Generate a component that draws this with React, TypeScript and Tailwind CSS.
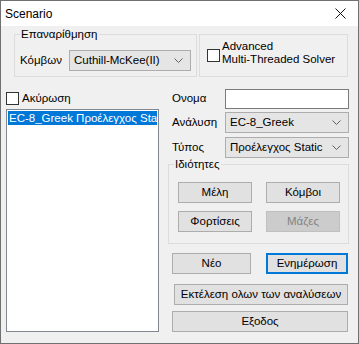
import React from 'react'

const FONT = "font-['Liberation_Sans','Noto_Sans',sans-serif]"

function Chevron() {
  return (
    <svg width="9" height="5" viewBox="0 0 9 5" className="shrink-0">
      <polyline points="0.5,0.5 4.5,4.5 8.5,0.5" fill="none" stroke="#606060" strokeWidth="1" />
    </svg>
  )
}

function Combo({ value, w }: { value: string; w: string }) {
  return (
    <div className={`${w} h-[21px] shrink-0 flex items-center justify-between pl-[4px] pr-[7px] bg-[#e5e5e5] border border-[#adadad] text-black`}>
      <span className="whitespace-nowrap">{value}</span>
      <Chevron />
    </div>
  )
}

function Check() {
  return <div className="w-[13px] h-[13px] shrink-0 bg-white border border-[#333333]" />
}

function Btn({ label, w, disabled, primary }: { label: string; w: string; disabled?: boolean; primary?: boolean }) {
  const look = disabled
    ? 'bg-[#cccccc] border border-[#bfbfbf] text-[#838383]'
    : primary
    ? 'bg-[#e1e1e1] border-2 border-[#0078d7] text-black'
    : 'bg-[#e1e1e1] border border-[#adadad] text-black'
  return (
    <div className={`${w} h-[21px] shrink-0 flex items-center justify-center whitespace-nowrap ${look}`}>
      {label}
    </div>
  )
}

function Group({ label, className, children }: { label?: string; className: string; children: React.ReactNode }) {
  return (
    <div className={`relative shrink-0 border border-[#dcdcdc] ${className}`}>
      {label && (
        <span className="absolute -top-[8px] left-[5px] px-[1px] bg-[#f0f0f0] leading-[14px] text-black">{label}</span>
      )}
      {children}
    </div>
  )
}

export default function App() {
  return (
    <div className={`${FONT} text-[11.5px] w-[359px] h-[344px] flex flex-col border border-[#707070] bg-[#f0f0f0] overflow-hidden`}>
      {/* Title bar */}
      <div className="h-[25px] shrink-0 bg-white flex items-center justify-between pl-[4px] pr-[12px]">
        <span className="text-black text-[12px]">Scenario</span>
        <svg width="11" height="11" viewBox="0 0 11 11">
          <line x1="0.5" y1="0.5" x2="10.5" y2="10.5" stroke="#111" strokeWidth="1" />
          <line x1="10.5" y1="0.5" x2="0.5" y2="10.5" stroke="#111" strokeWidth="1" />
        </svg>
      </div>

      {/* Top groups */}
      <div className="flex pl-[13px] mt-[8px]">
        <Group label="Επαναρίθμηση" className="w-[183px] h-[43px]">
          <div className="flex items-center pl-[5px] pt-[15px]">
            <span className="w-[49px] shrink-0">Κόμβων</span>
            <Combo value="Cuthill-McKee(II)" w="w-[122px]" />
          </div>
        </Group>
        <Group className="w-[149px] h-[43px] ml-[2px]">
          <div className="flex pl-[7px] pt-[5px]">
            <div className="mt-[9px]">
              <Check />
            </div>
            <div className="ml-[2px] leading-[13px] text-black whitespace-nowrap">
              <div>Advanced</div>
              <div>Multi-Threaded Solver</div>
            </div>
          </div>
        </Group>
      </div>

      {/* Main row */}
      <div className="flex">
        {/* Left column */}
        <div className="w-[153px] ml-[5px] shrink-0">
          <div className="flex items-center h-[13px] mt-[15px]">
            <Check />
            <span className="ml-[3px]">Ακύρωση</span>
          </div>
          <div className="mt-[4px] h-[223px] bg-white border border-[#828790] p-[1px] overflow-hidden">
            <div className="h-[14px] bg-[#0078d7] text-white leading-[14px] pl-[1px] whitespace-nowrap overflow-hidden">
              EC-8_Greek Προέλεγχος Static
            </div>
          </div>
        </div>

        {/* Right column */}
        <div className="w-[181px] ml-[9px] shrink-0">
          <div className="flex items-center h-[20px] mt-[12px]">
            <span className="w-[57px] pl-[4px] shrink-0">Ονομα</span>
            <div className="w-[124px] h-[20px] bg-white border border-[#7a7a7a]" />
          </div>
          <div className="flex items-center mt-[3px]">
            <span className="w-[57px] pl-[4px] shrink-0">Ανάλυση</span>
            <Combo value="EC-8_Greek" w="w-[124px]" />
          </div>
          <div className="flex items-center mt-[4px]">
            <span className="w-[57px] pl-[4px] shrink-0">Τύπος</span>
            <Combo value="Προέλεγχος Static" w="w-[124px]" />
          </div>

          <Group label="Ιδιότητες" className="w-[181px] h-[80px] mt-[6px]">
            <div className="flex flex-col gap-[8px] pl-[9px] pt-[17px]">
              <div className="flex gap-[14px]">
                <Btn label="Μέλη" w="w-[74px]" />
                <Btn label="Κόμβοι" w="w-[74px]" />
              </div>
              <div className="flex gap-[14px]">
                <Btn label="Φορτίσεις" w="w-[74px]" />
                <Btn label="Μάζες" w="w-[74px]" disabled />
              </div>
            </div>
          </Group>

          <div className="flex gap-[15px] ml-[4px] mt-[9px]">
            <Btn label="Νέο" w="w-[79px]" />
            <Btn label="Ενημέρωση" w="w-[82px]" primary />
          </div>
          <div className="ml-[6px] mt-[10px]">
            <Btn label="Εκτέλεση ολων των αναλύσεων" w="w-[174px]" />
          </div>
          <div className="ml-[4px] mt-[6px]">
            <Btn label="Εξοδος" w="w-[176px]" />
          </div>
        </div>
      </div>
    </div>
  )
}
